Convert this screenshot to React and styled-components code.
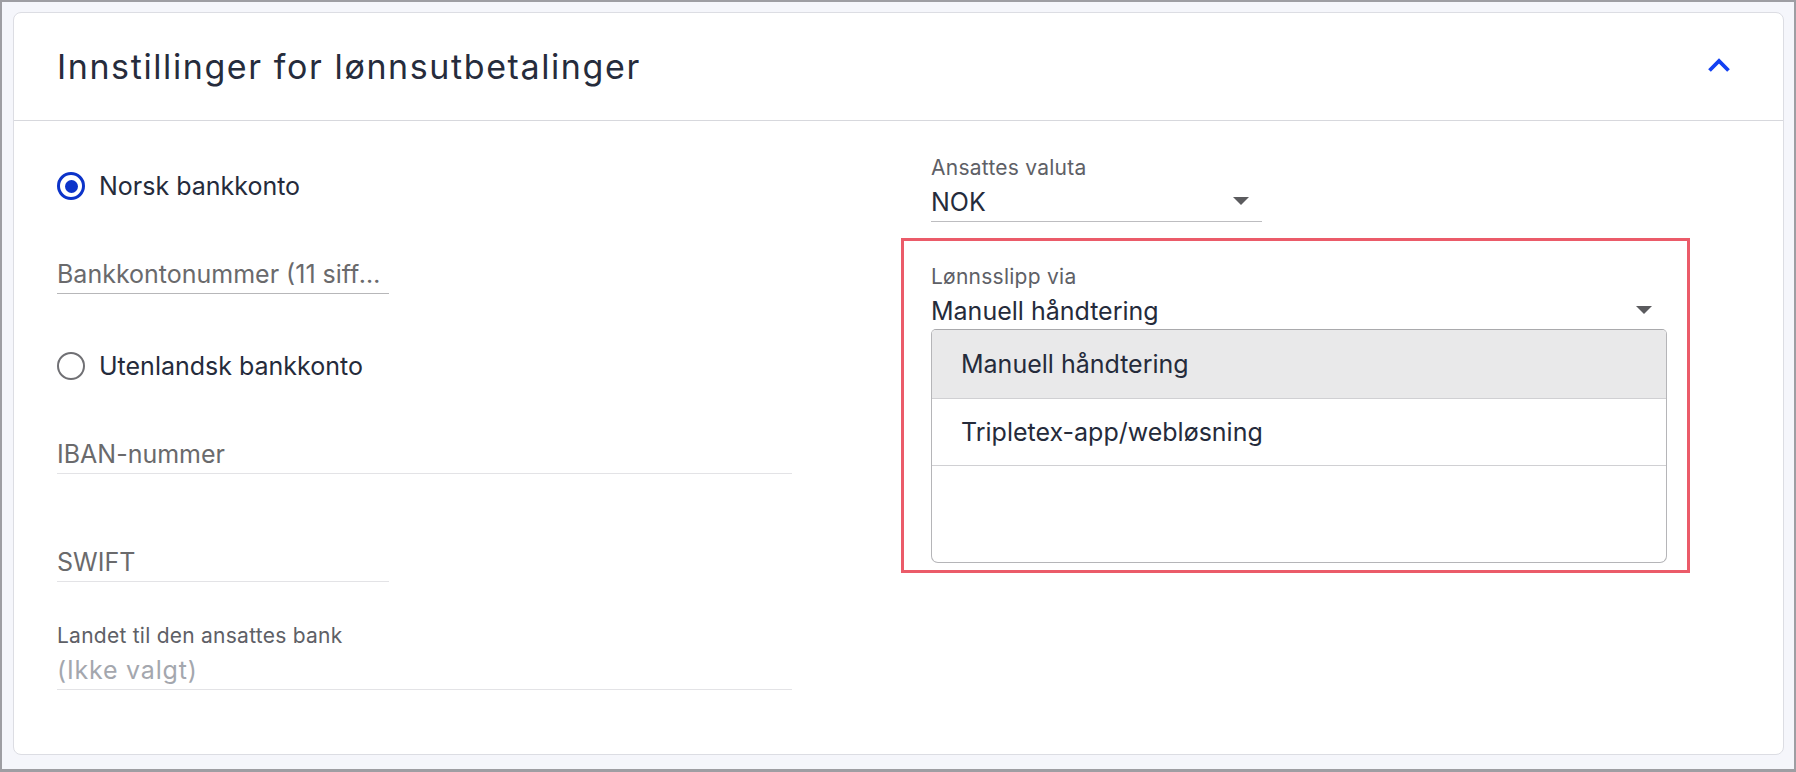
import React from "react";
import styled, { createGlobalStyle } from "styled-components";

const GlobalStyle = createGlobalStyle`
  html, body {
    margin: 0;
    padding: 0;
  }
  body {
    font-family: Inter, "Noto Sans", "Liberation Sans", sans-serif;
    background: #f5f6fb;
  }
`;

function Radio({ checked, children }) {
  return (
    <RadioRow $checked={checked}>
      <RadioCircle $checked={checked} />
      {children}
    </RadioRow>
  );
}

function Caret() {
  return (
    <CaretIcon width="16" height="8" viewBox="0 0 16 8">
      <polygon points="0,0 16,0 8,8" fill="currentColor" />
    </CaretIcon>
  );
}

function App() {
  return (
    <Page>
      <GlobalStyle />
      <Card>
        <Header>
          <Title>Innstillinger for lønnsutbetalinger</Title>
          <CollapseButton aria-label="Skjul">
            <svg width="24" height="16" viewBox="0 0 24 16">
              <polyline
                points="2.5,13.5 12,4 21.5,13.5"
                fill="none"
                stroke="currentColor"
                strokeWidth="3.8"
              />
            </svg>
          </CollapseButton>
        </Header>

        <Body>
          <Column>
            <Spacer $h={16} />
            <Radio checked>Norsk bankkonto</Radio>
            <Field $w={332} $mt={58}>
              <TextInput placeholder="Bankkontonummer (11 siffer)" $line="#b7b7b9" />
            </Field>
            <Spacer $h={57} />
            <Radio>Utenlandsk bankkonto</Radio>
            <Field $mt={58}>
              <TextInput placeholder="IBAN-nummer" />
            </Field>
            <Field $w={332} $mt={73}>
              <TextInput placeholder="SWIFT" />
            </Field>
            <Field $mt={41}>
              <Label>Landet til den ansattes bank</Label>
              <SelectValue $muted>(Ikke valgt)</SelectValue>
            </Field>
          </Column>

          <Column>
            <Field $w={331}>
              <Label>Ansattes valuta</Label>
              <SelectValue $line="#bdbdc0" $pr={13}>
                NOK
                <Caret />
              </SelectValue>
            </Field>

            <Highlight>
              <Label>Lønnsslipp via</Label>
              <SelectValue $open $pr={15}>
                Manuell håndtering
                <Caret />
              </SelectValue>
              <OptionList>
                <Option $active $h={68}>Manuell håndtering</Option>
                <Option $h={66}>Tripletex-app/webløsning</Option>
                <ListFiller />
              </OptionList>
            </Highlight>
          </Column>
        </Body>
      </Card>
    </Page>
  );
}

const Page = styled.div`
  box-sizing: border-box;
  width: 1796px;
  height: 772px;
  border: 2px solid #9e9ea3;
  border-bottom-width: 3px;
  background: #f5f6fb;
  padding: 10px 10px 0 11px;
`;

const Card = styled.section`
  background: #fff;
  border: 1px solid #dcdde3;
  border-radius: 8px;
`;

const Header = styled.header`
  height: 107px;
  display: flex;
  align-items: center;
  justify-content: space-between;
  padding: 0 52px 0 43px;
  border-bottom: 1px solid #d7d8dd;
`;

const Title = styled.h2`
  margin: 0;
  font-size: 34px;
  line-height: 40px;
  font-weight: 400;
  letter-spacing: 1.6px;
  color: #262c3c;
`;

const CollapseButton = styled.button`
  display: flex;
  padding: 0;
  margin: 0 0 3px;
  border: none;
  background: none;
  color: #1341f2;
  cursor: pointer;
`;

const Body = styled.div`
  display: grid;
  grid-template-columns: 735px 736px;
  column-gap: 139px;
  align-items: start;
  padding: 34px 0 64px 43px;
`;

const Column = styled.div`
  display: flex;
  flex-direction: column;
`;

const Spacer = styled.div`
  height: ${(p) => p.$h}px;
`;

const RadioRow = styled.label`
  display: flex;
  align-items: center;
  gap: 14px;
  height: 30px;
  font-size: 25px;
  line-height: 30px;
  color: #252b3b;
  cursor: pointer;
`;

const RadioCircle = styled.span`
  box-sizing: border-box;
  width: 28px;
  height: 28px;
  border-radius: 50%;
  border: ${(p) => (p.$checked ? "3px solid #0c33c9" : "2.5px solid #707074")};
  display: flex;
  align-items: center;
  justify-content: center;

  &::after {
    content: "";
    display: ${(p) => (p.$checked ? "block" : "none")};
    width: 13px;
    height: 13px;
    border-radius: 50%;
    background: #0c33c9;
  }
`;

const Field = styled.div`
  width: ${(p) => (p.$w ? `${p.$w}px` : "100%")};
  margin-top: ${(p) => p.$mt || 0}px;
`;

const Label = styled.div`
  font-size: 21px;
  line-height: 26px;
  letter-spacing: 0.25px;
  color: #5e6066;
  margin-bottom: 6px;
`;

const TextInput = styled.input`
  display: block;
  width: 100%;
  box-sizing: border-box;
  height: 35px;
  padding: 0 0 4px;
  border: none;
  border-bottom: 1px solid ${(p) => p.$line || "#e3e3e6"};
  outline: none;
  background: transparent;
  font-family: inherit;
  font-size: 25px;
  line-height: 30px;
  color: #252b3b;
  text-overflow: ellipsis;

  &::placeholder {
    color: #6a6a6c;
    opacity: 1;
  }
`;

const SelectValue = styled.div`
  display: flex;
  align-items: center;
  justify-content: space-between;
  height: 30px;
  font-size: 25px;
  line-height: 30px;
  letter-spacing: ${(p) => (p.$muted ? "0.8px" : "0")};
  color: ${(p) => (p.$muted ? "#a4a7ae" : "#252b3b")};
  padding: 0 ${(p) => p.$pr || 0}px ${(p) => (p.$open ? 3 : 4)}px 0;
  border-bottom: ${(p) =>
    p.$open ? "none" : `1px solid ${p.$line || "#e3e3e6"}`};
`;

const CaretIcon = styled.svg`
  color: #5b5b5e;
  margin-bottom: 3px;
  flex: none;
`;

const Highlight = styled.div`
  margin: 16px -23px 0 -30px;
  padding: 23px 20px 7px 27px;
  border: 3px solid #eb5b69;
`;

const OptionList = styled.div`
  border: 1px solid #b5b5b8;
  border-top-color: #a9a9ac;
  border-radius: 5px 5px 7px 7px;
  overflow: hidden;
  background: #fff;
`;

const Option = styled.div`
  height: ${(p) => p.$h}px;
  display: flex;
  align-items: center;
  padding-left: 29px;
  font-size: 25px;
  line-height: 30px;
  color: #252b3b;
  background: ${(p) => (p.$active ? "#e9e9ea" : "#fff")};
  border-bottom: 1px solid #d0d0d3;
`;

const ListFiller = styled.div`
  height: 96px;
`;

export default App;
